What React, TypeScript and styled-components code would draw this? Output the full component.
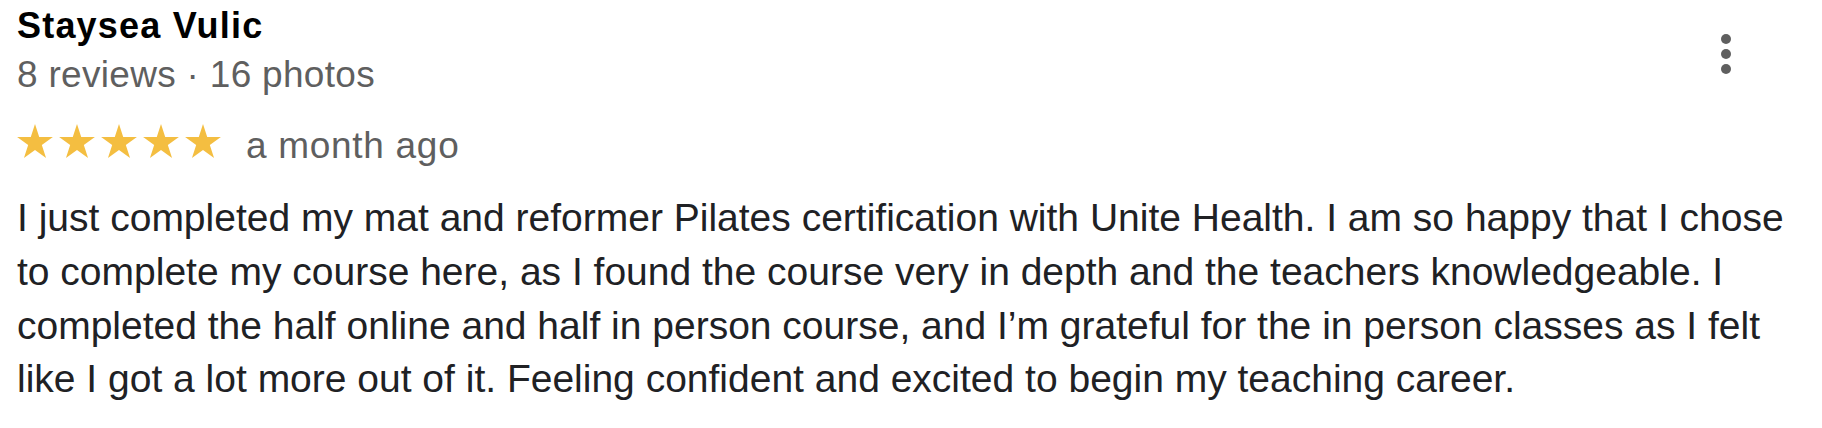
import React from 'react';
import styled, { createGlobalStyle } from 'styled-components';

const GlobalStyle = createGlobalStyle`
  html,
  body {
    margin: 0;
    padding: 0;
    background: #ffffff;
  }
  body {
    font-family: 'Liberation Sans', Arial, Helvetica, sans-serif;
    -webkit-font-smoothing: antialiased;
  }
`;

const Card = styled.div`
  display: flex;
  flex-direction: column;
  padding: 4px 0 0 17px;
  width: 100%;
  box-sizing: border-box;
`;

const Header = styled.div`
  display: flex;
  justify-content: space-between;
  align-items: flex-start;
`;

const Author = styled.div`
  display: flex;
  flex-direction: column;
`;

const Name = styled.div`
  font-size: 36px;
  line-height: 44px;
  font-weight: 700;
  letter-spacing: 1.2px;
  color: #000000;
`;

const Meta = styled.div`
  font-size: 37px;
  line-height: 54px;
  letter-spacing: 0.3px;
  color: #5f5f5f;
`;

const RatingRow = styled.div`
  display: flex;
  align-items: flex-start;
  height: 50px;
  margin-top: 19px;
`;

const Stars = styled.div`
  display: flex;
  gap: 6px;
  margin-top: 3px;
  margin-right: 25px;
`;

const Star = styled.svg`
  width: 36px;
  height: 34px;
  display: block;
  fill: #f4be41;
`;

const When = styled.span`
  font-size: 37px;
  line-height: 50px;
  letter-spacing: 0.7px;
  color: #5f5f5f;
`;

const MoreButton = styled.button`
  display: flex;
  flex-direction: column;
  align-items: center;
  justify-content: center;
  gap: 5px;
  width: 48px;
  height: 48px;
  margin: 26px 72px 0 0;
  padding: 0;
  border: none;
  background: transparent;
  cursor: pointer;
`;

const Dot = styled.span`
  width: 10px;
  height: 10px;
  border-radius: 50%;
  background: #5f5f5f;
`;

const Body = styled.p`
  margin: 20px 0 0;
  width: 1790px;
  font-size: 39px;
  line-height: 53.8px;
  color: #202124;
`;

const review = {
  author: 'Staysea Vulic',
  meta: '8 reviews · 16 photos',
  rating: 5,
  when: 'a month ago',
  text:
    'I just completed my mat and reformer Pilates certification with Unite Health. I am so happy that I chose to complete my course here, as I found the course very in depth and the teachers knowledgeable. I completed the half online and half in person course, and I\u2019m grateful for the in person classes as I felt like I got a lot more out of it. Feeling confident and excited to begin my teaching career.',
};

const StarIcon = () => (
  <Star viewBox="0 0 100 95.1">
    <polygon points="50,0 61.8,36.3 100,36.3 69.1,58.8 80.9,95.1 50,72.7 19.1,95.1 30.9,58.8 0,36.3 38.2,36.3" />
  </Star>
);

export default function App() {
  return (
    <>
      <GlobalStyle />
      <Card>
        <Header>
          <Author>
            <Name>{review.author}</Name>
            <Meta>{review.meta}</Meta>
            <RatingRow>
              <Stars aria-label={`${review.rating} stars`}>
                {Array.from({ length: review.rating }).map((_, i) => (
                  <StarIcon key={i} />
                ))}
              </Stars>
              <When>{review.when}</When>
            </RatingRow>
          </Author>
          <MoreButton aria-label="More options">
            <Dot />
            <Dot />
            <Dot />
          </MoreButton>
        </Header>
        <Body>{review.text}</Body>
      </Card>
    </>
  );
}
